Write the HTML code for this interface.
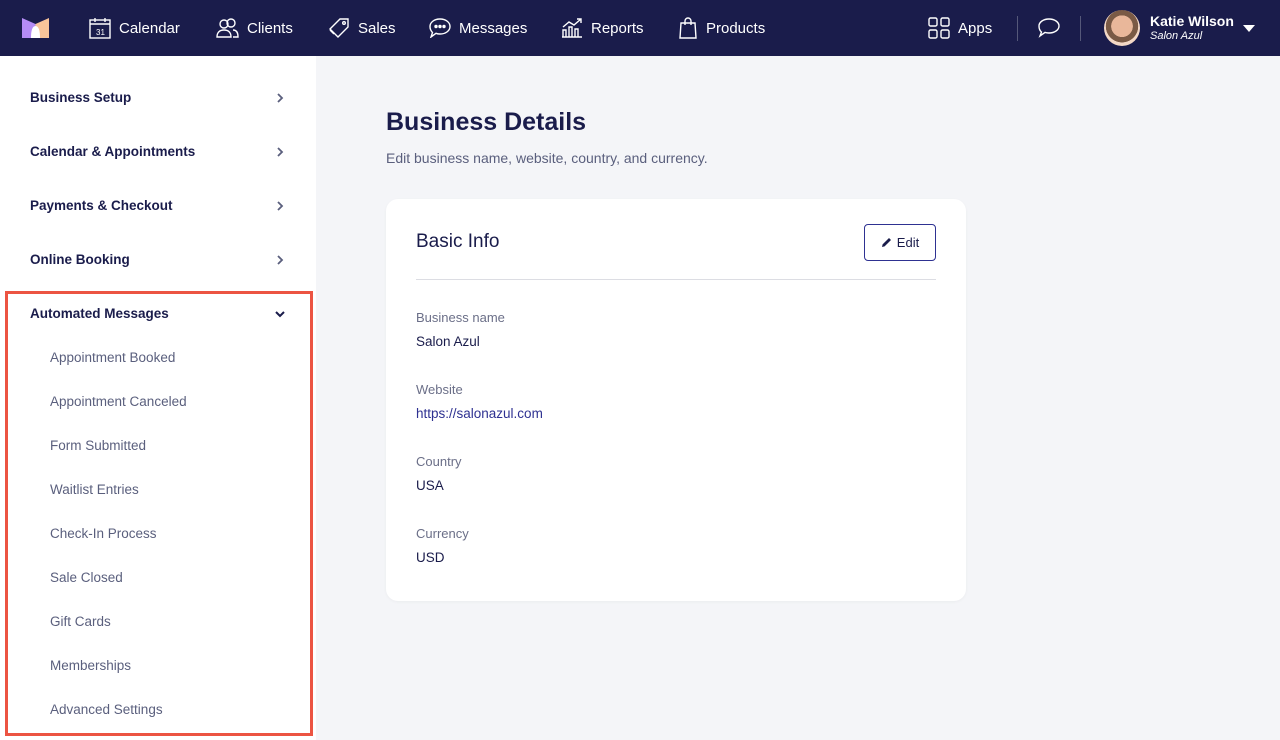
<!DOCTYPE html>
<html><head><style>
*{box-sizing:border-box;margin:0;padding:0}
body{width:1280px;height:740px;overflow:hidden;font-family:"Liberation Sans",sans-serif;background:#f4f5f8;position:relative}
.nav{position:absolute;left:0;top:0;width:1280px;height:56px;background:#1a1c4b;color:#fff}
.ni{position:absolute;top:0;height:56px;display:flex;align-items:center;font-size:15px;color:#fff}
.ni svg{margin-right:8px}
.side{position:absolute;left:0;top:56px;width:316px;height:684px;background:#fff}
.si{position:absolute;left:30px;font-size:13.5px;font-weight:bold;color:#1a1c4b}
.chev{position:absolute;left:274px}
.sub{position:absolute;left:50px;font-size:13.5px;color:#5a5f7d}
.box{position:absolute;left:5px;top:291px;width:308px;height:445px;border:3px solid #ec5442}
.card{position:absolute;left:386px;top:199px;width:580px;height:402px;background:#fff;border-radius:12px;box-shadow:0 1px 3px rgba(0,0,0,.04)}
.lbl{position:absolute;left:30px;font-size:13px;color:#6b6f88}
.val{position:absolute;left:30px;font-size:13.5px;color:#1a1c4b}
</style></head><body>
<div class="nav">
<svg style="position:absolute;left:22px;top:18px" width="27" height="20" viewBox="0 0 27 20"><path d="M0 0 L13.5 6 L13.5 20 L0 20Z" fill="#b58cf5"/><path d="M13.5 6 L27 0 L27 20 L13.5 20Z" fill="#f8c49a"/><path d="M9 20 Q9 8 13.5 8 Q18 8 18 20Z" fill="#fff"/></svg>
<div class="ni" style="left:89px"><svg width="22" height="22" viewBox="0 0 22 22" fill="none" stroke="#fff" stroke-width="1.4"><rect x="1" y="3" width="20" height="18"/><path d="M1 7h20M6 1v4M16 1v4"/><text x="7" y="18" font-size="8" fill="#fff" stroke="none">31</text></svg>Calendar</div>
<div class="ni" style="left:216px"><svg width="23" height="20" viewBox="0 0 23 20" fill="none" stroke="#fff" stroke-width="1.4"><circle cx="8" cy="6" r="4"/><path d="M1 19c0-5 3-7 7-7s7 2 7 7z"/><circle cx="15" cy="5" r="4"/><path d="M17 12c3 0 5 2 5 7h-5"/></svg>Clients</div>
<div class="ni" style="left:328px"><svg width="22" height="20" viewBox="0 0 22 20" fill="none" stroke="#fff" stroke-width="1.4"><path d="M12 1h8v8L10 19 2 11z"/><path d="M6 16l-4-4"/><circle cx="16" cy="5" r="1.3"/></svg>Sales</div>
<div class="ni" style="left:429px"><svg width="22" height="20" viewBox="0 0 22 20" fill="none" stroke="#fff" stroke-width="1.4"><path d="M11 1c6 0 10 3.5 10 7.5S17 16 11 16c-1.5 0-3-.3-4-.7L2 19l1.5-4.5C2 13 1 11 1 8.5 1 4.5 5 1 11 1z"/><circle cx="7" cy="8.5" r="1" fill="#fff"/><circle cx="11" cy="8.5" r="1" fill="#fff"/><circle cx="15" cy="8.5" r="1" fill="#fff"/></svg>Messages</div>
<div class="ni" style="left:561px"><svg width="22" height="20" viewBox="0 0 22 20" fill="none" stroke="#fff" stroke-width="1.4"><path d="M2 19V12h3v7M8 19V9h3v10M14 19V11h3v8M1 19h20M2 9l6-5 5 3 7-6M16 1h4v4"/></svg>Reports</div>
<div class="ni" style="left:678px"><svg width="20" height="22" viewBox="0 0 20 22" fill="none" stroke="#fff" stroke-width="1.4"><path d="M3 6h14l1 15H2z"/><path d="M7 8V4a3 3 0 016 0v4"/></svg>Products</div>
<div class="ni" style="left:928px"><svg width="22" height="22" viewBox="0 0 22 22" fill="none" stroke="#fff" stroke-width="1.4"><rect x="1" y="1" width="8" height="8" rx="1.5"/><rect x="13" y="1" width="8" height="8" rx="1.5"/><rect x="1" y="13" width="8" height="8" rx="1.5"/><rect x="13" y="13" width="8" height="8" rx="1.5"/></svg>Apps</div>
<div style="position:absolute;left:1017px;top:16px;width:1px;height:25px;background:#555879"></div>
<svg style="position:absolute;left:1037px;top:17px" width="23" height="22" viewBox="0 0 23 22" fill="none" stroke="#fff" stroke-width="1.4"><path d="M12 2c5.5 0 10 3 10 7s-4.5 7-10 7c-1.5 0-3-.2-4-.6L3 19l1.5-4C2.5 13.5 2 11.5 2 9c0-4 4.5-7 10-7z"/></svg>
<div style="position:absolute;left:1080px;top:16px;width:1px;height:25px;background:#555879"></div>
<div style="position:absolute;left:1104px;top:10px;width:36px;height:36px;border-radius:50%;background:radial-gradient(circle at 50% 45%,#e9b79a 0 40%,#7a5a45 41% 60%,#f3d8c6 61%)"></div>
<div style="position:absolute;left:1150px;top:13px;font-size:14px;font-weight:bold;color:#fff">Katie Wilson</div>
<div style="position:absolute;left:1150px;top:30px;font-size:11px;font-style:italic;color:#fff">Salon Azul</div>
<div style="position:absolute;left:1243px;top:25px;border-left:6px solid transparent;border-right:6px solid transparent;border-top:7px solid #fff"></div>
</div>
<div class="side">
<div class="si" style="top:34px">Business Setup</div>
<div class="si" style="top:88px">Calendar &amp; Appointments</div>
<div class="si" style="top:142px">Payments &amp; Checkout</div>
<div class="si" style="top:196px">Online Booking</div>
<div class="si" style="top:250px">Automated Messages</div>
<svg class="chev" style="top:36px" width="12" height="12" viewBox="0 0 12 12" fill="none" stroke="#5a5f7d" stroke-width="1.8"><path d="M4 2l4 4-4 4"/></svg>
<svg class="chev" style="top:90px" width="12" height="12" viewBox="0 0 12 12" fill="none" stroke="#5a5f7d" stroke-width="1.8"><path d="M4 2l4 4-4 4"/></svg>
<svg class="chev" style="top:144px" width="12" height="12" viewBox="0 0 12 12" fill="none" stroke="#5a5f7d" stroke-width="1.8"><path d="M4 2l4 4-4 4"/></svg>
<svg class="chev" style="top:198px" width="12" height="12" viewBox="0 0 12 12" fill="none" stroke="#5a5f7d" stroke-width="1.8"><path d="M4 2l4 4-4 4"/></svg>
<svg class="chev" style="top:252px" width="12" height="12" viewBox="0 0 12 12" fill="none" stroke="#1a1c4b" stroke-width="2"><path d="M2 4l4 4 4-4"/></svg>
<div class="sub" style="top:294px">Appointment Booked</div>
<div class="sub" style="top:338px">Appointment Canceled</div>
<div class="sub" style="top:382px">Form Submitted</div>
<div class="sub" style="top:426px">Waitlist Entries</div>
<div class="sub" style="top:470px">Check-In Process</div>
<div class="sub" style="top:514px">Sale Closed</div>
<div class="sub" style="top:558px">Gift Cards</div>
<div class="sub" style="top:602px">Memberships</div>
<div class="sub" style="top:646px">Advanced Settings</div>
</div>
<div class="box"></div>
<div style="position:absolute;left:386px;top:108px;font-size:25px;font-weight:bold;color:#1a1c4b">Business Details</div>
<div style="position:absolute;left:386px;top:150px;font-size:14px;color:#5a5f7d">Edit business name, website, country, and currency.</div>
<div class="card">
<div style="position:absolute;left:30px;top:32px;font-size:19px;color:#1a1c4b">Basic Info</div>
<div style="position:absolute;left:478px;top:25px;width:72px;height:37px;border:1px solid #2e3191;border-radius:4px;font-size:13px;color:#1a1c4b;display:flex;align-items:center;justify-content:center"><svg width="11" height="11" viewBox="0 0 11 11" style="margin-right:5px"><path d="M1 10l.6-2.6L8 1l2 2-6.4 6.4z" fill="#1a1c4b"/></svg>Edit</div>
<div style="position:absolute;left:30px;top:80px;width:520px;height:1px;background:#dcdde3"></div>
<div class="lbl" style="top:111px">Business name</div><div class="val" style="top:135px">Salon Azul</div>
<div class="lbl" style="top:183px">Website</div><div class="val" style="top:207px;color:#2e3191">https://salonazul.com</div>
<div class="lbl" style="top:255px">Country</div><div class="val" style="top:279px">USA</div>
<div class="lbl" style="top:327px">Currency</div><div class="val" style="top:351px">USD</div>
</div>
</body></html>
